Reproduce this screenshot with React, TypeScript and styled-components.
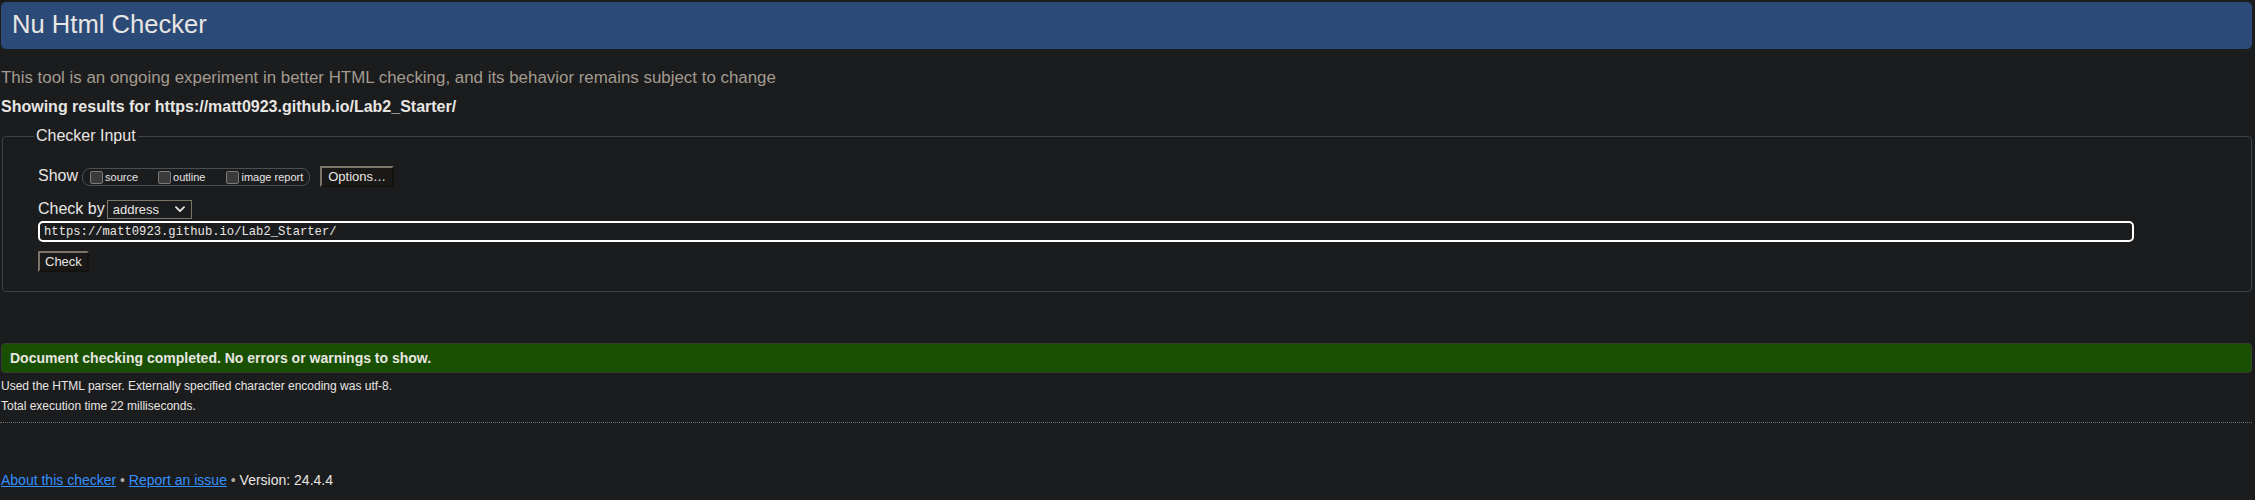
import React from "react";
import styled, { createGlobalStyle } from "styled-components";

const Global = createGlobalStyle`
  html, body {
    margin: 0;
    padding: 0;
    background: #1b1c1e;
  }
  body {
    font-family: "Liberation Sans", Arial, sans-serif;
    color: #e8e6e3;
  }
`;

const Page = styled.div`
  padding: 2px 3px 0 1px;
  width: 2251px;
  box-sizing: content-box;
`;

const Header = styled.h1`
  margin: 0;
  height: 47px;
  box-sizing: border-box;
  padding: 8px 11px 0;
  background: #2c4a77;
  border-radius: 5px;
  font-size: 25.6px;
  line-height: 29px;
  font-weight: normal;
  color: #e8e6e3;
`;

const Intro = styled.p`
  margin: 19px 0 0;
  font-size: 16.9px;
  line-height: 19px;
  color: #a39b8f;
`;

const Showing = styled.p`
  margin: 11px 0 0;
  font-size: 16px;
  line-height: 18px;
  font-weight: bold;
  color: #e8e6e3;
`;

const Fieldset = styled.fieldset`
  margin: 11px 0 0 1px;
  padding: 21px 35px 19px 35px;
  border: 1px solid #3e4346;
  border-radius: 4px;
  min-width: 0;
`;

const Legend = styled.legend`
  margin-left: -4px;
  padding: 0 2px;
  font-size: 16px;
  line-height: 18px;
  color: #e8e6e3;
`;

const Row = styled.div<{ $mt: number }>`
  display: flex;
  align-items: baseline;
  margin-top: ${(p) => p.$mt}px;
`;

const Label = styled.span<{ $gap: number }>`
  font-size: 16px;
  line-height: 18px;
  margin-right: ${(p) => p.$gap}px;
`;

const CheckGroup = styled.span`
  display: inline-flex;
  align-items: baseline;
  height: 18px;
  box-sizing: border-box;
  padding: 0 6px 0 7px;
  border: 1px solid #4a4f52;
  border-radius: 8px;
  margin-right: 10px;
`;

const CheckItem = styled.label<{ $gap: number }>`
  display: inline-flex;
  align-items: baseline;
  font-size: 11px;
  line-height: 16px;
  color: #e8e6e3;
  margin-right: ${(p) => p.$gap}px;
`;

const Box = styled.input`
  appearance: none;
  -webkit-appearance: none;
  width: 13px;
  height: 13px;
  margin: 0 2px 0 0;
  box-sizing: border-box;
  border: 1px solid #7a7a7a;
  border-radius: 2px;
  background: #3b3b3b;
  align-self: center;
`;

const OutsetButton = styled.button<{ $pad: number }>`
  font-family: "Liberation Sans", Arial, sans-serif;
  font-size: 13px;
  line-height: 15px;
  height: 21px;
  box-sizing: border-box;
  padding: 1px ${(p) => p.$pad}px;
  color: #e8e6e3;
  background: #1a1917;
  border-style: solid;
  border-width: 2px;
  border-color: #7b7468 #14130f #14130f #7b7468;
  border-radius: 0;
`;

const SelectWrap = styled.span`
  position: relative;
  display: inline-block;
`;

const Select = styled.select`
  appearance: none;
  -webkit-appearance: none;
  width: 85px;
  height: 19px;
  box-sizing: border-box;
  padding: 0 0 0 5px;
  font-family: "Liberation Sans", Arial, sans-serif;
  font-size: 13px;
  color: #e8e6e3;
  background: #1b1c1e;
  border: 1px solid #7d7567;
  border-radius: 0;
`;

const Chevron = styled.svg`
  position: absolute;
  right: 7px;
  top: 6px;
  width: 10px;
  height: 7px;
  pointer-events: none;
`;

const UrlInput = styled.input`
  display: block;
  width: calc(100% - 82px);
  height: 21px;
  box-sizing: border-box;
  padding: 0 4px;
  border: 2px solid #ffffff;
  border-radius: 5px;
  background: #1b1c1e;
  color: #e8e6e3;
  font-family: "Liberation Mono", "DejaVu Sans Mono", monospace;
  font-size: 12.2px;
  outline: none;
`;

const Success = styled.div`
  margin-top: 51px;
  padding: 6px 8px;
  border: 1px solid #35402f;
  border-radius: 4px;
  background: #194f00;
  font-size: 14px;
  line-height: 16px;
  font-weight: bold;
  color: #e8e6e3;
`;

const Detail = styled.p<{ $mt: number }>`
  margin: ${(p) => p.$mt}px 0 0;
  font-size: 12px;
  line-height: 14px;
  color: #e8e6e3;
`;

const Rule = styled.hr`
  margin: 9px 0 0 -1px;
  border: 0;
  border-top: 1px dotted #6b6b6b;
  height: 0;
`;

const Footer = styled.p`
  margin: 49px 0 0;
  font-size: 14px;
  line-height: 16px;
  color: #e8e6e3;
`;

const Link = styled.a`
  color: #3391ff;
  text-decoration: underline;
`;

const Bullet = styled.span`
  color: #b0aaa0;
`;

export default function App() {
  return (
    <>
      <Global />
      <Page>
        <Header>Nu Html Checker</Header>
        <Intro>
          This tool is an ongoing experiment in better HTML checking, and its behavior remains subject to change
        </Intro>
        <Showing>Showing results for https://matt0923.github.io/Lab2_Starter/</Showing>
        <Fieldset>
          <Legend>Checker Input</Legend>
          <Row $mt={0}>
            <Label $gap={4}>Show</Label>
            <CheckGroup>
              <CheckItem $gap={20}>
                <Box type="checkbox" />
                source
              </CheckItem>
              <CheckItem $gap={21}>
                <Box type="checkbox" />
                outline
              </CheckItem>
              <CheckItem $gap={0}>
                <Box type="checkbox" />
                image report
              </CheckItem>
            </CheckGroup>
            <OutsetButton $pad={6}>Options…</OutsetButton>
          </Row>
          <Row $mt={13}>
            <Label $gap={2}>Check by</Label>
            <SelectWrap>
              <Select defaultValue="address">
                <option value="address">address</option>
                <option value="upload">file upload</option>
                <option value="text">text input</option>
              </Select>
              <Chevron viewBox="0 0 10 7">
                <path d="M1 1.2 L5 5.2 L9 1.2" fill="none" stroke="#e8e6e3" strokeWidth="1.8" strokeLinecap="round" strokeLinejoin="round" />
              </Chevron>
            </SelectWrap>
          </Row>
          <Row $mt={2}>
            <UrlInput type="url" defaultValue="https://matt0923.github.io/Lab2_Starter/" />
          </Row>
          <Row $mt={9}>
            <OutsetButton $pad={5}>Check</OutsetButton>
          </Row>
        </Fieldset>
        <Success>Document checking completed. No errors or warnings to show.</Success>
        <Detail $mt={6}>Used the HTML parser. Externally specified character encoding was utf-8.</Detail>
        <Detail $mt={6}>Total execution time 22 milliseconds.</Detail>
        <Rule />
        <Footer>
          <Link href="#">About this checker</Link> <Bullet>•</Bullet> <Link href="#">Report an issue</Link>{" "}
          <Bullet>•</Bullet> Version: 24.4.4
        </Footer>
      </Page>
    </>
  );
}
